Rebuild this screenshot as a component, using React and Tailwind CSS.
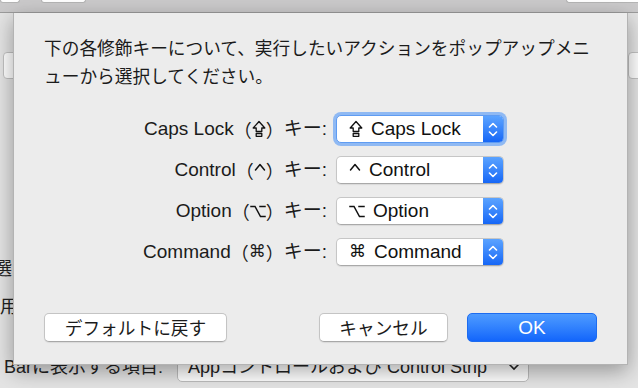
import React from "react";

const font = "font-['Liberation_Sans','Noto_Sans_CJK_JP','DejaVu_Sans',sans-serif]";

// caps lock glyph: outlined up-arrow over a small bar
const CapsGlyph = ({ className = "" }) => (
  <svg width="14" height="18" viewBox="0 0 14 18" className={className} fill="none" stroke="#111" strokeWidth="1.3" strokeLinejoin="round">
    <path d="M7 1.5 L12.8 8 H9.8 V11.5 H4.2 V8 H1.2 Z" />
    <rect x="4.2" y="13.5" width="5.6" height="2.8" />
  </svg>
);

const CaretGlyph = ({ className = "" }) => (
  <svg width="12" height="18" viewBox="0 0 12 18" className={className} fill="none" stroke="#111" strokeWidth="1.5" strokeLinecap="round" strokeLinejoin="round">
    <path d="M1.5 9 L6 3.5 L10.5 9" />
  </svg>
);

const OptionGlyph = ({ className = "" }) => (
  <svg width="16" height="18" viewBox="0 0 16 18" className={className} fill="none" stroke="#111" strokeWidth="1.5" strokeLinecap="square">
    <path d="M1 4.5 H5 L10.5 14.5 H15" />
    <path d="M10 4.5 H15" />
  </svg>
);

const Stepper = () => (
  <div className="w-[20px] h-full rounded-r-[4px] bg-gradient-to-b from-[#5ba3ff] to-[#1566f6] flex flex-col items-center justify-center gap-[3px]">
    <svg width="10" height="6" viewBox="0 0 10 6" fill="none" stroke="white" strokeWidth="1.6" strokeLinecap="round" strokeLinejoin="round">
      <path d="M1.5 5 L5 1.5 L8.5 5" />
    </svg>
    <svg width="10" height="6" viewBox="0 0 10 6" fill="none" stroke="white" strokeWidth="1.6" strokeLinecap="round" strokeLinejoin="round">
      <path d="M1.5 1 L5 4.5 L8.5 1" />
    </svg>
  </div>
);

const rows = [
  { name: "Caps Lock", glyph: "caps", value: "Caps Lock", focused: true },
  { name: "Control", glyph: "caret", value: "Control" },
  { name: "Option", glyph: "option", value: "Option" },
  { name: "Command", glyph: "cmd", value: "Command" },
];

const Glyph = ({ kind }) => {
  if (kind === "caps") return <CapsGlyph className="inline-block" />;
  if (kind === "caret") return <CaretGlyph className="inline-block" />;
  if (kind === "option") return <OptionGlyph className="inline-block" />;
  return <span className="text-[17px] font-['DejaVu_Sans',sans-serif]">⌘</span>;
};

const Paren = ({ children }) => (
  <span className="font-['Noto_Sans_CJK_JP',sans-serif] text-[18px]">{children}</span>
);

export default function App() {
  return (
    <div className={`relative w-[638px] h-[388px] overflow-hidden bg-[#e4e4e4] ${font}`}>
      {/* window behind the sheet */}
      <div className="h-[13px] bg-[#cbcacb] border-b border-[#9c9c9c] flex items-start">
        <div className="w-[20px] h-[3px] bg-white border border-t-0 border-[#b5b5b5] rounded-b-[3px]" />
        <div className="ml-[21px] w-[45px] h-[3px] bg-white border border-t-0 border-[#b5b5b5] rounded-b-[3px]" />
        <div className="ml-auto w-[72px] h-[3px] bg-white border border-t-0 border-r-0 border-[#b5b5b5] rounded-bl-[3px]" />
      </div>
      <div className="absolute left-[3px] top-[52px] w-[20px] h-[27px] bg-white border border-[#c2c2c2] rounded-[4px]" />
      <div className="absolute right-[-12px] top-[52px] w-[22px] h-[27px] bg-white border border-[#c2c2c2] rounded-[4px]" />
      <div className="absolute left-[-6px] top-[256px] text-[18px] text-[#222] whitespace-nowrap">選ん</div>
      <div className="absolute left-[0px] top-[294px] text-[18px] text-[#222] whitespace-nowrap">用し</div>
      <div className="absolute left-[4px] top-[352px] flex items-center whitespace-nowrap text-[18px] text-[#222]">
        <span>Barに表示する項目:</span>
        <div className="ml-[14px] w-[352px] h-[30px] bg-white border border-[#bdbdbd] rounded-[5px] flex items-center pl-[10px] pr-[8px]">
          <span className="flex-1">Appコントロールおよび Control Strip</span>
          <svg width="12" height="8" viewBox="0 0 12 8" fill="none" stroke="#222" strokeWidth="1.6">
            <path d="M1.5 1.5 L6 6 L10.5 1.5" />
          </svg>
        </div>
      </div>

      {/* sheet */}
      <div className="absolute left-[13px] top-[13px] w-[615px] h-[352px] bg-[#ececec] border-x border-b border-[#b3b3b3] shadow-[0_6px_20px_rgba(0,0,0,0.35)] flex flex-col">
        <p className="pl-[30px] pt-[20px] text-[17.7px] leading-[28px] text-[#1b1b1b] whitespace-nowrap font-['Noto_Sans_CJK_JP',sans-serif]">
          下の各修飾キーについて、実行したいアクションをポップアップメニ
          <br />
          ューから選択してください。
        </p>

        <div className="mt-[26px] flex flex-col gap-[13px]">
          {rows.map((r) => (
            <div key={r.name} className="flex items-center h-[28px]">
              <div className="w-[313px] flex items-center justify-end text-[19px] text-[#1b1b1b] whitespace-nowrap">
                <span>{r.name}</span>
                <Paren>（</Paren>
                <Glyph kind={r.glyph} />
                <Paren>）</Paren>
                <span>キー:</span>
              </div>
              <div
                className={`ml-[9px] w-[168px] h-[28px] bg-white rounded-[5px] flex items-stretch ${
                  r.focused
                    ? "border border-[#5f9cf2] ring-[3px] ring-[#8fb9f3]"
                    : "border border-[#c6c6c6] border-b-[#a9a9a9] shadow-[0_1px_1px_rgba(0,0,0,0.08)]"
                }`}
              >
                <div className="flex-1 flex items-center pl-[12px] gap-[8px] text-[19px] text-[#111] whitespace-nowrap">
                  <Glyph kind={r.glyph} />
                  <span>{r.value}</span>
                </div>
                <Stepper />
              </div>
            </div>
          ))}
        </div>

        <div className="mt-auto pb-[22px] pl-[30px] pr-[30px] flex items-center text-[17.7px] text-[#1b1b1b]">
          <button className="w-[183px] h-[29px] bg-white border border-[#c4c4c4] border-b-[#a8a8a8] rounded-[5px] shadow-[0_1px_1px_rgba(0,0,0,0.08)] font-['Noto_Sans_CJK_JP',sans-serif]">
            デフォルトに戻す
          </button>
          <button className="ml-auto w-[129px] h-[29px] bg-white border border-[#c4c4c4] border-b-[#a8a8a8] rounded-[5px] shadow-[0_1px_1px_rgba(0,0,0,0.08)] font-['Noto_Sans_CJK_JP',sans-serif]">
            キャンセル
          </button>
          <button className="ml-[19px] w-[130px] h-[29px] rounded-[5px] bg-gradient-to-b from-[#4e9bff] to-[#1265fb] border border-[#1d6cf0] text-white text-[19px]">
            OK
          </button>
        </div>
      </div>
    </div>
  );
}
